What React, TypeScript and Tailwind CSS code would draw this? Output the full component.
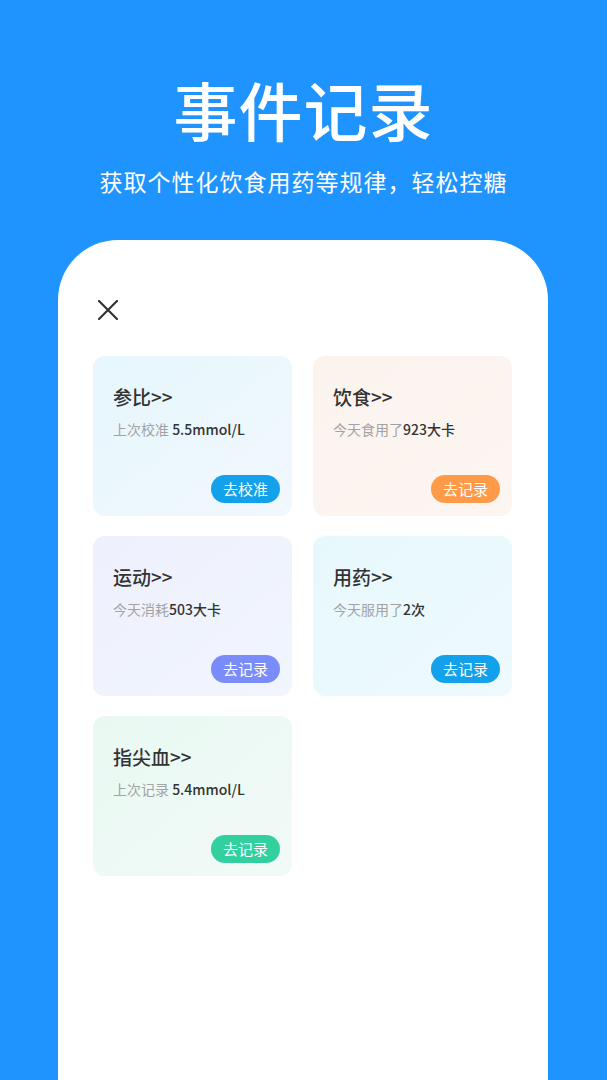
import React from 'react'

type Card = {
  title: string
  label: string
  value: string
  action: string
  bg: string
  btn: string
}

const cards: Card[] = [
  {
    title: '参比>>',
    label: '上次校准 ',
    value: '5.5mmol/L',
    action: '去校准',
    bg: 'bg-gradient-to-br from-[#e6f7fd] to-[#f1f8fe]',
    btn: 'bg-[#14a1ec]',
  },
  {
    title: '饮食>>',
    label: '今天食用了',
    value: '923大卡',
    action: '去记录',
    bg: 'bg-gradient-to-br from-[#fbf3ee] to-[#fcf5f1]',
    btn: 'bg-[#ff9a48]',
  },
  {
    title: '运动>>',
    label: '今天消耗',
    value: '503大卡',
    action: '去记录',
    bg: 'bg-gradient-to-br from-[#eef1fd] to-[#f1f5fe]',
    btn: 'bg-[#7a8bfa]',
  },
  {
    title: '用药>>',
    label: '今天服用了',
    value: '2次',
    action: '去记录',
    bg: 'bg-gradient-to-br from-[#e7f8fc] to-[#eefafd]',
    btn: 'bg-[#14a1ec]',
  },
  {
    title: '指尖血>>',
    label: '上次记录 ',
    value: '5.4mmol/L',
    action: '去记录',
    bg: 'bg-gradient-to-br from-[#e9f9f2] to-[#f1faf7]',
    btn: 'bg-[#33d09f]',
  },
]

function EventCard({ card }: { card: Card }) {
  return (
    <div className={`h-[160px] rounded-[12px] ${card.bg} flex flex-col pl-[20px] pr-[12px] pt-[29px] pb-[13px]`}>
      <div className="text-[19px] leading-[24px] font-medium text-[#333333]">{card.title}</div>
      <div className="mt-[10px] text-[14px] leading-[20px]">
        <span className="text-[#a3a3a3]">{card.label}</span>
        <span className="text-[#333333] font-medium">{card.value}</span>
      </div>
      <div className="mt-auto flex justify-end">
        <div className={`h-[28px] w-[69px] rounded-full ${card.btn} flex items-center justify-center text-[15px] text-white`}>
          {card.action}
        </div>
      </div>
    </div>
  )
}

export default function App() {
  return (
    <div
      className="w-[607px] h-[1080px] overflow-hidden bg-[#1f94ff] flex flex-col"
      style={{ fontFamily: '"Noto Sans CJK SC", "Noto Sans", sans-serif' }}
    >
      {/* 顶部标题 */}
      <div className="pt-[76px] flex flex-col items-center text-white">
        <div className="text-[64px] leading-[64px] font-medium tracking-[1px]">事件记录</div>
        <div className="mt-[29px] text-[23px] leading-[24px] tracking-[1px]">获取个性化饮食用药等规律，轻松控糖</div>
      </div>

      {/* 白色面板 */}
      <div className="mt-[47px] ml-[58px] w-[490px] flex-1 bg-white rounded-t-[60px] pl-[35px] pr-[36px] pt-[60px]">
        <div className="pl-[5px]">
          <svg width="20" height="20" viewBox="0 0 20 20" fill="none">
            <path d="M1 1L19 19M19 1L1 19" stroke="#333333" strokeWidth="2.2" strokeLinecap="round" />
          </svg>
        </div>
        <div className="mt-[36px] grid grid-cols-2 gap-x-[21px] gap-y-[20px]">
          {cards.map((c) => (
            <EventCard key={c.title} card={c} />
          ))}
        </div>
      </div>
    </div>
  )
}
